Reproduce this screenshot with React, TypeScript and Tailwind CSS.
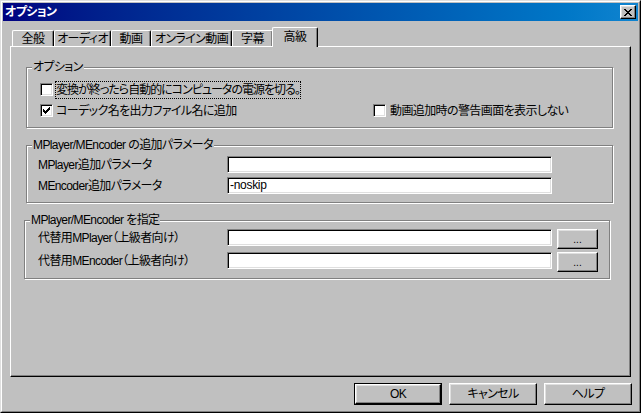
import type { ReactNode } from "react";

// classic win9x bevels
const raised =
  "border border-t-white border-l-white border-r-black border-b-black shadow-[inset_-1px_-1px_0_#808080,inset_1px_1px_0_#dfdfdf] bg-[#c0c0c0]";
const sunken =
  "border border-t-[#808080] border-l-[#808080] border-r-white border-b-white shadow-[inset_1px_1px_0_#000,inset_-1px_-1px_0_#dfdfdf] bg-white";

const tabs = [
  { label: "全般", w: "w-[42px]" },
  { label: "オーディオ", w: "w-[57px]" },
  { label: "動画", w: "w-[40px]" },
  { label: "オンライン動画", w: "w-[81px]" },
  { label: "字幕", w: "w-[41px]" },
];

function Checkbox({ checked }: { checked?: boolean }) {
  return (
    <span className={`w-[13px] h-[13px] shrink-0 flex items-center justify-center ${sunken}`}>
      {checked && (
        <svg width="7" height="7" viewBox="0 0 7 7" shapeRendering="crispEdges">
          <path
            d="M6 0h1v3h-1v1h-1v1h-1v1h-1v1h-1v-1h-1v-1h-1v-3h1v1h1v1h1v-1h1v-1h1z"
            fill="#000"
          />
        </svg>
      )}
    </span>
  );
}

function Group({
  label,
  className,
  children,
}: {
  label: string;
  className: string;
  children: ReactNode;
}) {
  return (
    <div
      className={`relative border border-[#808080] shadow-[inset_1px_1px_0_#fff,1px_1px_0_#fff] ${className}`}
    >
      <span className="absolute -top-[8px] left-[5px] bg-[#c0c0c0] px-[1px] leading-[14px] whitespace-nowrap">
        {label}
      </span>
      {children}
    </div>
  );
}

function Field({ value }: { value?: string }) {
  return (
    <div className={`w-[325px] h-[17px] flex items-center pl-[2px] ${sunken}`}>
      <span className="leading-[13px] text-[12px] tracking-[-0.3px]">{value}</span>
    </div>
  );
}

function DlgButton({ label, isDefault }: { label: string; isDefault?: boolean }) {
  if (isDefault) {
    return (
      <div className="w-[88px] h-[22px] border border-black">
        <div className={`w-full h-full flex items-center justify-center ${raised}`}>{label}</div>
      </div>
    );
  }
  return (
    <div className={`w-[88px] h-[22px] flex items-center justify-center ${raised}`}>{label}</div>
  );
}

export default function App() {
  return (
    <div className="w-[641px] h-[413px] border border-t-[#dfdfdf] border-l-[#dfdfdf] border-r-black border-b-black bg-[#c0c0c0] text-black text-[12px] leading-[14px] tracking-[-0.6px] font-['Liberation_Sans','Noto_Sans_CJK_JP',sans-serif] [font-feature-settings:'palt']">
      <div className="w-full h-full border border-t-white border-l-white border-r-[#808080] border-b-[#808080] p-[1px] flex flex-col">
        {/* title bar */}
        <div className="h-[18px] shrink-0 flex items-center justify-between bg-linear-to-r from-[#000080] to-[#1084d0] pl-[2px] pr-[2px]">
          <span className="text-white font-bold text-[12px] leading-[14px]">オプション</span>
          <div className={`w-[16px] h-[14px] flex items-center justify-center ${raised}`}>
            <svg width="8" height="7" viewBox="0 0 8 7" shapeRendering="crispEdges">
              <path
                d="M0 0h2v1h1v1h2v-1h1v-1h2v1h-1v1h-1v1h-1v1h1v1h1v1h1v1h-2v-1h-1v-1h-2v1h-1v1h-2v-1h1v-1h1v-1h1v-1h-1v-1h-1v-1h-1z"
                fill="#000"
              />
            </svg>
          </div>
        </div>

        {/* body */}
        <div className="flex-1 pt-[6px] pl-[7px]">
          {/* tab strip */}
          <div className="h-[19px] flex items-end pl-[2px]">
            {tabs.map((t) => (
              <div
                key={t.label}
                className={`${t.w} h-[16px] flex items-center justify-center border-t border-l border-r border-t-white border-l-white border-r-black shadow-[inset_-1px_0_0_#808080] rounded-t-[2px]`}
              >
                {t.label}
              </div>
            ))}
            <div className="relative z-10 -ml-[1px] w-[46px] h-[20px] -mb-[1px] flex items-start justify-center pt-[2px] bg-[#c0c0c0] border-t border-l border-r border-t-white border-l-white border-r-black shadow-[inset_-1px_0_0_#808080] rounded-t-[2px]">
              高級
            </div>
          </div>

          {/* panel */}
          <div className="w-[621px] h-[331px] border border-t-white border-l-white border-r-black border-b-black shadow-[inset_-1px_-1px_0_#808080] pt-[20px] pl-[15px]">
            <Group label="オプション" className="w-[587px] h-[61px] pt-[15px] pl-[13px]">
              <div className="flex flex-col gap-[8px]">
                <div className="h-[13px] flex items-center gap-[2px]">
                  <Checkbox />
                  <span className="border border-dotted border-black py-[1px] whitespace-nowrap tracking-[-1px]">
                    変換が終ったら自動的にコンピュータの電源を切る。
                  </span>
                </div>
                <div className="h-[13px] flex items-center">
                  <div className="w-[333px] flex items-center gap-[3px]">
                    <Checkbox checked />
                    <span className="whitespace-nowrap">コーデック名を出力ファイル名に追加</span>
                  </div>
                  <div className="flex items-center gap-[4px]">
                    <Checkbox />
                    <span className="whitespace-nowrap">動画追加時の警告画面を表示しない</span>
                  </div>
                </div>
              </div>
            </Group>

            <Group
              label="MPlayer/MEncoder の追加パラメータ"
              className="mt-[17px] w-[587px] h-[58px] pt-[10px] pl-[11px]"
            >
              <div className="flex flex-col gap-[4px]">
                <div className="flex items-center">
                  <span className="w-[189px] whitespace-nowrap">MPlayer追加パラメータ</span>
                  <Field />
                </div>
                <div className="flex items-center">
                  <span className="w-[189px] whitespace-nowrap">MEncoder追加パラメータ</span>
                  <Field value="-noskip" />
                </div>
              </div>
            </Group>

            <Group
              label="MPlayer/MEncoder を指定"
              className="mt-[17px] -ml-[2px] w-[586px] h-[59px] pt-[8px] pl-[13px]"
            >
              <div className="flex flex-col gap-[3px]">
                {["代替用MPlayer（上級者向け）", "代替用MEncoder（上級者向け）"].map((l) => (
                  <div key={l} className="h-[20px] flex items-start">
                    <span className="w-[189px] h-[17px] flex items-center whitespace-nowrap">{l}</span>
                    <Field />
                    <div
                      className={`ml-[5px] w-[41px] h-[20px] flex items-center justify-center pt-[2px] text-[10px] leading-[10px] tracking-normal ${raised}`}
                    >
                      ...
                    </div>
                  </div>
                ))}
              </div>
            </Group>
          </div>

          {/* dialog buttons */}
          <div className="mt-[6px] flex justify-end gap-[7px] pr-[6px]">
            <DlgButton label="OK" isDefault />
            <DlgButton label="キャンセル" />
            <DlgButton label="ヘルプ" />
          </div>
        </div>
      </div>
    </div>
  );
}
